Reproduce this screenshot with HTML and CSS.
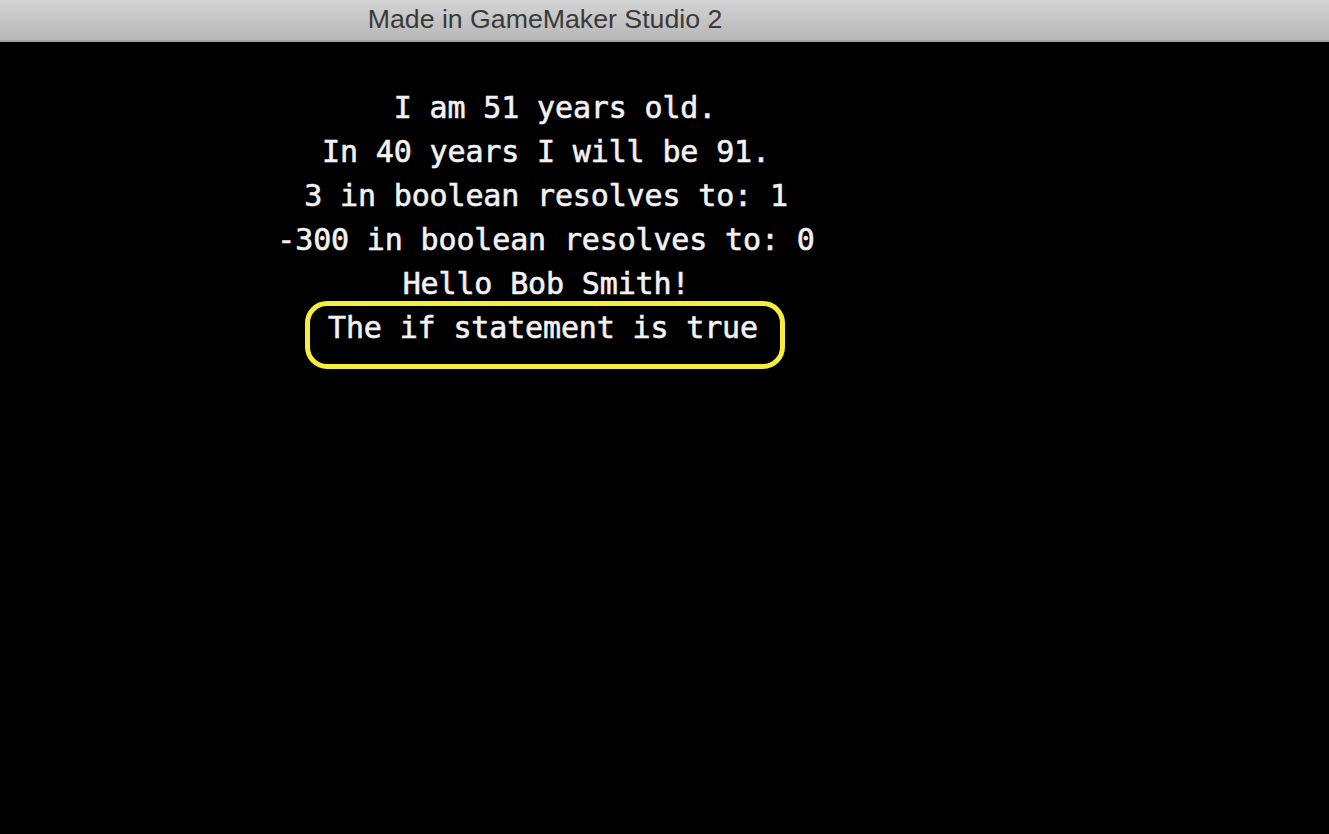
FILE: index.html
```html
<!DOCTYPE html>
<html lang="en">
<head>
<meta charset="utf-8">
<title>Made in GameMaker Studio 2</title>
<link rel="stylesheet" href="styles.css">
</head>
<body>
<div class="window">
  <header class="titlebar">
    <div class="title-track"><span class="title">Made in GameMaker Studio 2</span></div>
  </header>
  <main class="game">
    <div class="output">
      <div class="line line-first">I am 51 years old.</div>
      <div class="line">In 40 years I will be 91.</div>
      <div class="line">3 in boolean resolves to: 1</div>
      <div class="line">-300 in boolean resolves to: 0</div>
      <div class="line">Hello Bob Smith!</div>
      <div class="line"><span class="highlight">The if statement is true</span></div>
    </div>
  </main>
</div>
</body>
</html>
```
FILE: styles.css
```css
html, body {
  margin: 0;
  padding: 0;
  background: #000;
}
.window {
  width: 1329px;
  height: 834px;
  display: flex;
  flex-direction: column;
  background: #000;
  overflow: hidden;
}
.titlebar {
  height: 40px;
  flex: 0 0 40px;
  background: linear-gradient(#d4d4d4, #c2c2c2 60%, #b8b8b8);
  border-bottom: 2px solid #a4a4a4;
  display: flex;
}
.title-track {
  width: 1090px;
  display: flex;
  align-items: center;
  justify-content: center;
}
.title {
  font-family: "Liberation Sans", Arial, sans-serif;
  font-size: 26.7px;
  color: #3a3a3a;
  padding-bottom: 1px;
}
.game {
  flex: 1;
  background: #000;
}
.output {
  width: 1092px;
  padding-top: 44px;
  display: flex;
  flex-direction: column;
  align-items: center;
}
.line {
  font-family: "DejaVu Sans Mono", "Liberation Mono", monospace;
  font-size: 30px;
  line-height: 44px;
  height: 44px;
  color: #f2f2f2;
  white-space: pre;
  letter-spacing: -0.15px;
  -webkit-text-stroke: 0.6px #f2f2f2;
}
.line-first {
  padding-left: 18px;
}
.highlight {
  display: inline-block;
  border: 5px solid #f7ee3c;
  border-radius: 22px;
  padding: 0 22px 14px 18px;
  margin-top: -11px;
  line-height: 44px;
  margin-left: -2px;
}
```
